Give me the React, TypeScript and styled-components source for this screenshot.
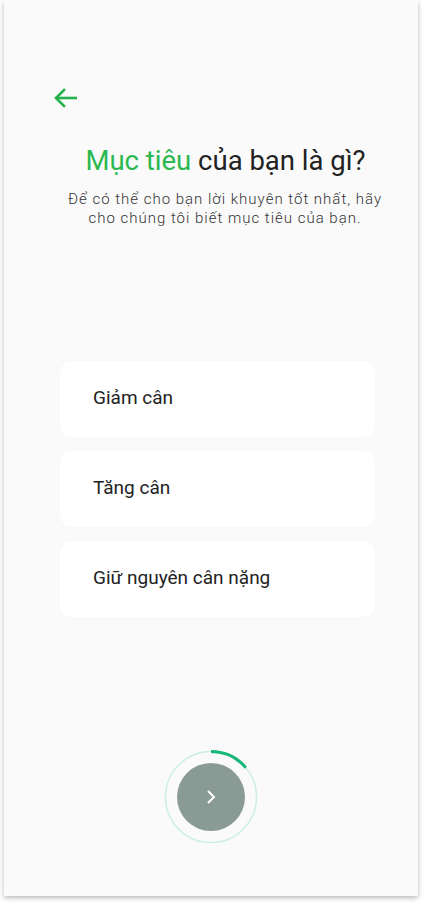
import React from "react";
import styled, { createGlobalStyle } from "styled-components";

const Global = createGlobalStyle`
  html, body { margin: 0; padding: 0; background: #ffffff; }
  body { font-family: Roboto, "Noto Sans", sans-serif; }
  * { box-sizing: border-box; }
`;

const Page = styled.div`
  width: 422px;
  height: 904px;
  padding: 0 4px 8px 4px;
  display: flex;
`;

const Screen = styled.div`
  flex: 1;
  background: #fafafa;
  box-shadow: 0 2px 5px rgba(0, 0, 0, 0.28);
  display: flex;
  flex-direction: column;
  align-items: stretch;
`;

const BackRow = styled.div`
  padding: 86px 0 0 47px;
  height: 112px;
  display: flex;
  align-items: flex-start;
`;

const BackButton = styled.button`
  border: 0;
  background: transparent;
  padding: 0;
  width: 30px;
  height: 24px;
  display: flex;
  align-items: center;
  justify-content: center;
  cursor: pointer;
`;

const Title = styled.h1`
  margin: 32px 0 0 0;
  text-align: center;
  font-family: Roboto, sans-serif;
  font-weight: 400;
  font-size: 27.5px;
  line-height: 34px;
  color: #222222;
  padding-left: 29px;
`;

const Green = styled.span`
  color: #2bb84f;
`;

const Subtitle = styled.p`
  margin: 12px 0 0 0;
  text-align: center;
  font-family: Roboto, sans-serif;
  font-weight: 300;
  font-size: 15px;
  line-height: 19px;
  letter-spacing: 1px;
  color: #333333;
  padding-left: 28px;
`;

const Options = styled.div`
  margin: 133px 0 0 56px;
  width: 315px;
  display: flex;
  flex-direction: column;
  gap: 14px;
`;

const Option = styled.div`
  height: 76px;
  background: #ffffff;
  border-radius: 12px;
  display: flex;
  align-items: center;
  padding: 0 0 3px 33px;
  font-family: Roboto, sans-serif;
  font-size: 19px;
  color: #222222;
  box-shadow: 0 0 3px rgba(0, 0, 0, 0.015);
`;

const Footer = styled.div`
  margin-top: auto;
  padding-bottom: 52px;
  display: flex;
  justify-content: center;
`;

const NextWrap = styled.div`
  position: relative;
  width: 94px;
  height: 94px;
`;

const Ring = styled.svg`
  position: absolute;
  inset: 0;
`;

const NextButton = styled.button`
  position: absolute;
  left: 13px;
  top: 13px;
  width: 68px;
  height: 68px;
  border-radius: 50%;
  border: 0;
  background: #8a9b96;
  display: flex;
  align-items: center;
  justify-content: center;
  padding: 0;
  cursor: pointer;
`;

export default function App() {
  const cx = 47;
  const cy = 47;
  const r = 45.5;
  const angle = (50 * Math.PI) / 180;
  const ex = cx + r * Math.sin(angle);
  const ey = cy - r * Math.cos(angle);
  return (
    <Page>
      <Global />
      <Screen>
        <BackRow>
          <BackButton aria-label="back">
            <svg width="26" height="20" viewBox="0 0 26 20" fill="none">
              <path d="M24 10H3" stroke="#24b24c" strokeWidth="2.6" />
              <path d="M11 2L3 10L11 18" stroke="#24b24c" strokeWidth="2.6" strokeLinecap="square" />
            </svg>
          </BackButton>
        </BackRow>
        <Title>
          <Green>Mục tiêu</Green> của bạn là gì?
        </Title>
        <Subtitle>
          Để có thể cho bạn lời khuyên tốt nhất, hãy
          <br />
          cho chúng tôi biết mục tiêu của bạn.
        </Subtitle>
        <Options>
          <Option>Giảm cân</Option>
          <Option>Tăng cân</Option>
          <Option>Giữ nguyên cân nặng</Option>
        </Options>
        <Footer>
          <NextWrap>
            <Ring width="94" height="94" viewBox="0 0 94 94">
              <circle cx={cx} cy={cy} r={r} fill="none" stroke="#cdefe2" strokeWidth="1.5" />
              <path
                d={`M ${cx} ${cy - r} A ${r} ${r} 0 0 1 ${ex} ${ey}`}
                fill="none"
                stroke="#17b877"
                strokeWidth="3"
              />
            </Ring>
            <NextButton aria-label="next">
              <svg width="14" height="18" viewBox="0 0 14 18" fill="none">
                <path d="M4 3L10 9L4 15" stroke="#ffffff" strokeWidth="2" />
              </svg>
            </NextButton>
          </NextWrap>
        </Footer>
      </Screen>
    </Page>
  );
}
